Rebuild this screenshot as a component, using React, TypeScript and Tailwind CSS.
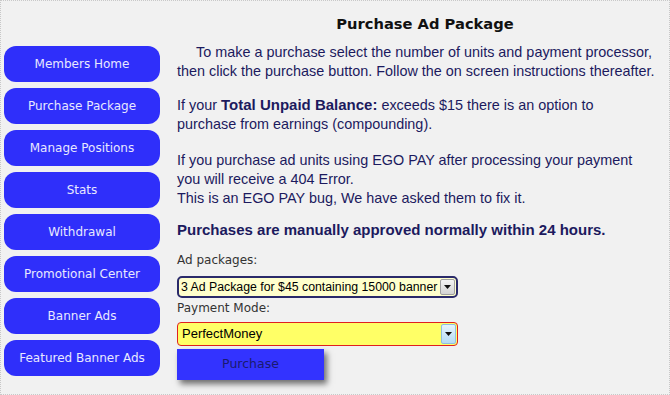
import React from 'react';

const menu = [
    'Members Home',
    'Purchase Package',
    'Manage Positions',
    'Stats',
    'Withdrawal',
    'Promotional Center',
    'Banner Ads',
    'Featured Banner Ads',
];

const verdana = { fontFamily: '"DejaVu Sans", Verdana, sans-serif' };
const arial = { fontFamily: '"Liberation Sans", Arial, sans-serif' };

const Arrow: React.FC<{ blue?: boolean }> = ({ blue }) => (
    <div
        className={`flex items-center justify-center w-[15px] self-stretch my-[1px] mr-[1px] rounded-[2px] border ${
            blue ? 'bg-gradient-to-b from-[#e6f3fc] to-[#b5dcf5] border-[#8fbfe0]' : 'bg-gradient-to-b from-[#f4f4f4] to-[#d4d4d4] border-[#a0a0a0]'
        }`}
    >
        <svg width="7" height="4" viewBox="0 0 7 4">
            <path d="M0 0h7L3.5 4z" fill="#111" />
        </svg>
    </div>
);

const App: React.FC = () => {
    return (
        <div className="w-[670px] h-[395px] bg-[#f1f1f1] border border-dotted border-[#c8c8c8] flex overflow-hidden">
            {/* Sidebar */}
            <div className="w-[176px] shrink-0 pl-[3px] pt-[45px] flex flex-col gap-[6px]" style={verdana}>
                {menu.map((item) => (
                    <div
                        key={item}
                        className="w-[156px] h-[36px] rounded-[12px] bg-[#2f2ffa] flex items-center justify-center text-[12px] text-[#e8e8ff]"
                    >
                        {item}
                    </div>
                ))}
            </div>

            {/* Content */}
            <div className="flex-1 pt-[12px]" style={arial}>
                <h1 className="text-center text-[14.7px] font-bold text-[#111] pl-[4px]" style={verdana}>
                    Purchase Ad Package
                </h1>

                <div className="mt-[8px] text-[14.4px] leading-[19px] text-[#1c1a5e] whitespace-nowrap">
                    <p className="indent-[19px]">
                        To make a purchase select the number of units and payment processor,
                        <br />
                        then click the purchase button. Follow the on screen instructions thereafter.
                    </p>
                    <p className="mt-[14px]">
                        If your <b className="text-[15px]">Total Unpaid Balance:</b> exceeds $15 there is an option to
                        <br />
                        purchase from earnings (compounding).
                    </p>
                    <p className="mt-[17px]">
                        If you purchase ad units using EGO PAY after processing your payment
                        <br />
                        you will receive a 404 Error.
                        <br />
                        This is an EGO PAY bug, We have asked them to fix it.
                    </p>
                    <p className="mt-[12px] text-[15px] font-bold">
                        Purchases are manually approved normally within 24 hours.
                    </p>
                </div>

                <div className="mt-[12px] text-[12px] text-[#333]" style={verdana}>
                    Ad packages:
                </div>
                <div className="mt-[7px] w-[281px] h-[22px] flex items-center border-2 border-[#2a2a6a] rounded-[5px] bg-[#ffffcc]">
                    <span className="flex-1 min-w-0 pl-[2px] text-[12.3px] text-black whitespace-nowrap overflow-hidden">
                        3 Ad Package for $45 containing 15000 banner
                    </span>
                    <Arrow />
                </div>
                <div className="mt-[1px] text-[12px] text-[#333]" style={verdana}>
                    Payment Mode:
                </div>
                <div className="mt-[5px] w-[281px] h-[24px] flex items-center border border-[#e02020] rounded-[4px] bg-[#ffff66]">
                    <span className="flex-1 pl-[4px] text-[13px] text-black">PerfectMoney</span>
                    <Arrow blue />
                </div>
                <button
                    className="mt-[3px] w-[147px] h-[31px] bg-[#3333ff] text-[12.5px] text-[#1a1a70] shadow-[3px_4px_6px_rgba(0,0,0,0.55)]"
                    style={verdana}
                >
                    Purchase
                </button>
            </div>
        </div>
    );
};

export default App;
